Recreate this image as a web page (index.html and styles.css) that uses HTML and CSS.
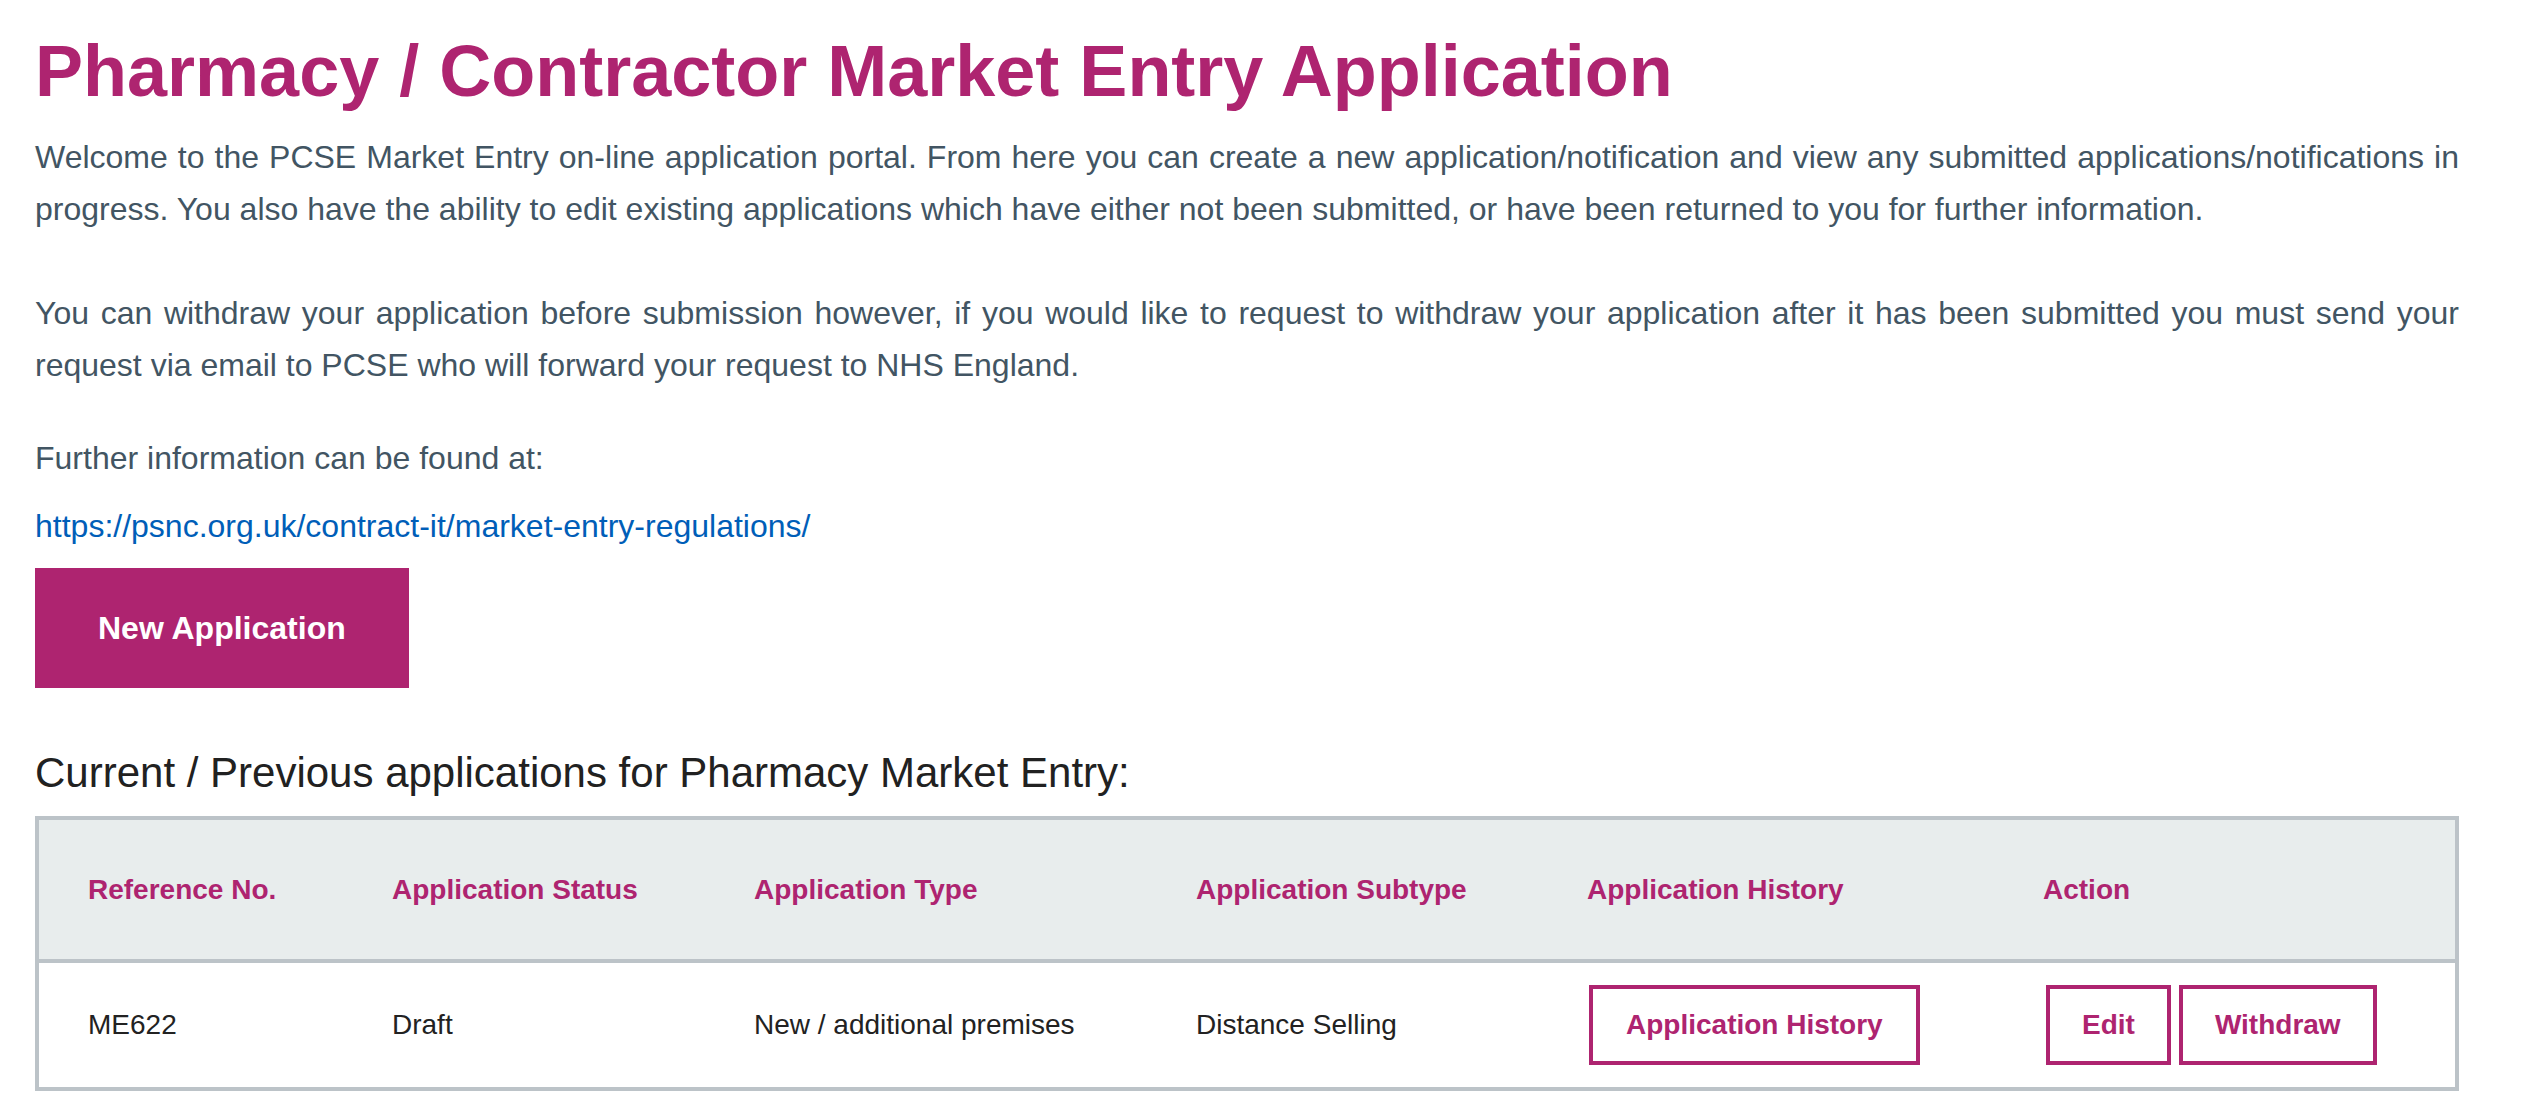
FILE: index.html
```html
<!DOCTYPE html>
<html lang="en">
<head>
<meta charset="utf-8">
<title>Pharmacy / Contractor Market Entry Application</title>
<link rel="stylesheet" href="styles.css">
</head>
<body>
<main class="page">
  <h1 class="title">Pharmacy / Contractor Market Entry Application</h1>
  <p class="intro">Welcome to the PCSE Market Entry on-line application portal. From here you can create a new application/notification and view any submitted applications/notifications in progress. You also have the ability to edit existing applications which have either not been submitted, or have been returned to you for further information.</p>
  <p class="intro intro-second">You can withdraw your application before submission however, if you would like to request to withdraw your application after it has been submitted you must send your request via email to PCSE who will forward your request to NHS England.</p>
  <p class="info">Further information can be found at:</p>
  <p class="info-link"><a class="link" href="#">https://psnc.org.uk/contract-it/market-entry-regulations/</a></p>
  <div class="actions">
    <button class="btn-primary" type="button">New Application</button>
  </div>
  <h2 class="section-title">Current / Previous applications for Pharmacy Market Entry:</h2>
  <div class="table" role="table">
    <div class="row row-head" role="row">
      <div class="cell th" role="columnheader">Reference No.</div>
      <div class="cell th" role="columnheader">Application Status</div>
      <div class="cell th" role="columnheader">Application Type</div>
      <div class="cell th" role="columnheader">Application Subtype</div>
      <div class="cell th" role="columnheader">Application History</div>
      <div class="cell th" role="columnheader">Action</div>
    </div>
    <div class="row row-body" role="row">
      <div class="cell td" role="cell">ME622</div>
      <div class="cell td" role="cell">Draft</div>
      <div class="cell td" role="cell">New / additional premises</div>
      <div class="cell td" role="cell">Distance Selling</div>
      <div class="cell td" role="cell"><button class="btn-outline btn-history" type="button">Application History</button></div>
      <div class="cell td cell-actions" role="cell">
        <button class="btn-outline btn-edit" type="button">Edit</button>
        <button class="btn-outline" type="button">Withdraw</button>
      </div>
    </div>
  </div>
</main>
</body>
</html>
```
FILE: styles.css
```css
html, body {
  margin: 0;
  padding: 0;
  background: #ffffff;
}

body {
  font-family: "Liberation Sans", Arial, sans-serif;
  color: #425563;
}

.page {
  width: 2424px;
  padding: 28px 0 40px 35px;
}

.title {
  margin: 0 0 17px 0;
  font-size: 72px;
  line-height: 86px;
  font-weight: 700;
  color: #ae2470;
}

.intro {
  margin: 0;
  font-size: 32px;
  line-height: 52px;
  text-align: justify;
  color: #425563;
}

.intro-second {
  margin-top: 52px;
}

.info {
  margin: 41px 0 0 0;
  font-size: 32px;
  line-height: 52px;
  color: #425563;
}

.info-link {
  margin: 16px 0 0 0;
  font-size: 32px;
  line-height: 52px;
}

.link {
  color: #005eb8;
  text-decoration: none;
}

.actions {
  margin-top: 16px;
  display: flex;
}

.btn-primary {
  height: 120px;
  padding: 0 63px;
  border: 0;
  border-radius: 0;
  background: #ae2470;
  color: #ffffff;
  font-family: "Liberation Sans", Arial, sans-serif;
  font-size: 32px;
  font-weight: 700;
  cursor: pointer;
}

.section-title {
  margin: 60px 0 18px 0;
  font-size: 42px;
  line-height: 50px;
  font-weight: 400;
  color: #212121;
}

.table {
  border: 4px solid #bcc3c8;
  width: 2424px;
  box-sizing: border-box;
}

.row {
  display: grid;
  grid-template-columns: 353px 362px 442px 391px 456px 1fr;
  align-items: center;
}

.row > .cell:first-child {
  padding-left: 49px;
}

.row-head {
  height: 139px;
  background: #e8eded;
  border-bottom: 4px solid #bcc3c8;
}

.row-body {
  height: 124px;
  background: #ffffff;
}

.th {
  font-size: 28px;
  font-weight: 700;
  color: #ae2470;
}

.td {
  font-size: 28px;
  color: #222222;
}

.cell-actions {
  display: flex;
  gap: 8px;
}

.btn-outline {
  height: 80px;
  box-sizing: border-box;
  padding: 0 32px;
  border: 4px solid #ae2470;
  border-radius: 0;
  background: #ffffff;
  color: #ae2470;
  font-family: "Liberation Sans", Arial, sans-serif;
  font-size: 28px;
  font-weight: 700;
  cursor: pointer;
}

.btn-history {
  margin-left: 2px;
  padding: 0 33px;
}

.btn-edit {
  margin-left: 3px;
}
```
